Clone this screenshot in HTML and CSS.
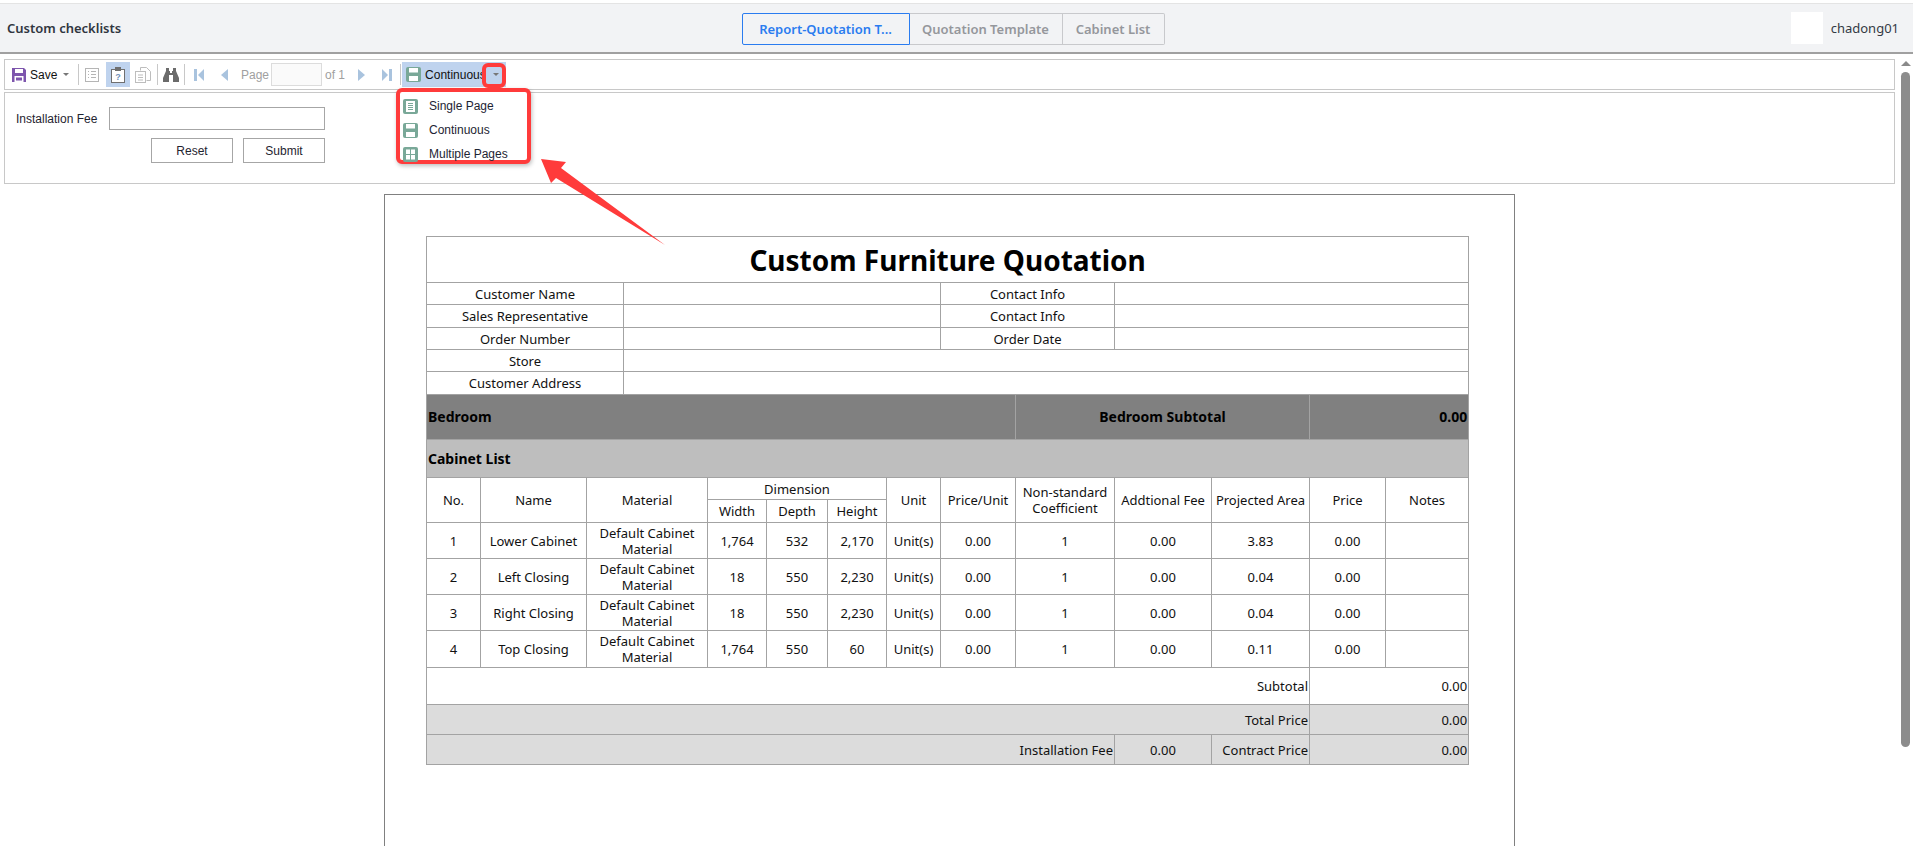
FILE: index.html
```html
<!DOCTYPE html>
<html lang="en">
<head>
    <meta charset="UTF-8">
    <title>Custom checklists</title>
    <link rel="stylesheet" href="styles.css">
</head>
<body>
    <header class="topBar">
        <div class="topTitle">Custom checklists</div>
        <div class="tabs">
            <div class="tab tabActive">Report-Quotation T...</div>
            <div class="tab tabSecond">Quotation Template</div>
            <div class="tab tabThird">Cabinet List</div>
        </div>
        <div class="userBox">
            <div class="avatar"></div>
            <span>chadong01</span>
        </div>
    </header>

    <div class="workspace">
        <main class="content">
            <div class="toolbar">
                <div class="saveBtn">
                    <svg class="icon14" viewBox="0 0 14 14"><path d="M0 0h12l2 2v12H0z" fill="#7d55ad"/><rect x="3" y="1" width="8" height="4" fill="#fff"/><rect x="2.5" y="8" width="9" height="6" fill="#fff"/><rect x="4" y="9.500" width="6" height="3" fill="#7d55ad"/></svg>
                    <span>Save</span>
                    <i class="caret"></i>
                </div>
                <i class="sep sepFirst"></i>
                <div class="tool toolList">
                    <svg class="icon14" viewBox="0 0 14 14" fill="none" stroke="#b5b5b5"><rect x=".5" y=".5" width="13" height="13"/><path d="M3 3.500h1M6 3.500h5M3 6.500h1M6 6.500h5M3 9.500h1M6 9.500h5"/></svg>
                </div>
                <div class="tool toolActive">
                    <svg class="icon16" viewBox="0 0 14 16" fill="none"><rect x=".5" y="2.500" width="13" height="13" stroke="#6f6f6f" fill="#fff"/><rect x="4" y="0" width="6" height="4" fill="#6f6f6f"/><text x="7" y="13" class="helpMark">?</text></svg>
                </div>
                <div class="tool toolCopy">
                    <svg class="icon16" viewBox="0 0 16 16" fill="none" stroke="#bdbdbd"><path d="M5.500 3.500v-3h6l4 4v9h-4"/><rect x=".5" y="4.500" width="10" height="11" fill="#fff"/><path d="M3 8h5M3 10.500h5M3 13h5"/></svg>
                </div>
                <i class="sep"></i>
                <div class="tool toolFind">
                    <svg class="icon16" viewBox="0 0 16 14" fill="#6b6b6b"><path d="M3 0h3v3h1v2h2V3h1V0h3v3l3 7v4H10V7H6v7H0v-4l3-7z"/></svg>
                </div>
                <i class="sep"></i>
                <div class="tool toolFirst">
                    <svg class="navIcon" viewBox="0 0 10 12" fill="#a9c3de"><rect width="3" height="12"/><path d="M10 0v12L4 6z"/></svg>
                </div>
                <div class="tool toolPrev">
                    <svg class="navIcon small" viewBox="0 0 7 12" fill="#a9c3de"><path d="M7 0v12L0 6z"/></svg>
                </div>
                <span class="pageLabel">Page</span>
                <input class="pageInput" type="text">
                <span class="ofLabel">of 1</span>
                <div class="tool toolNext">
                    <svg class="navIcon small" viewBox="0 0 7 12" fill="#a9c3de"><path d="M0 0v12l7-6z"/></svg>
                </div>
                <div class="tool toolLast">
                    <svg class="navIcon" viewBox="0 0 10 12" fill="#a9c3de"><path d="M0 0v12l6-6z"/><rect x="7" width="3" height="12"/></svg>
                </div>
                <i class="sep"></i>
                <div class="viewBtn">
                    <svg class="icon15" viewBox="0 0 15 15"><rect width="15" height="15" rx="2" fill="#79a898"/><rect x="3" y="1" width="9" height="4.500" fill="#fff"/><rect x="3" y="9" width="9" height="5" fill="#fff"/></svg>
                    <span>Continuous</span>
                    <i class="caret"></i>
                </div>
            </div>

            <form class="params">
                <div class="paramRow">
                    <label class="paramLabel">Installation Fee</label>
                    <input class="paramInput" type="text">
                </div>
                <div class="paramBtns">
                    <div class="paramBtn">Reset</div>
                    <div class="paramBtn">Submit</div>
                </div>
            </form>

            <div class="sheet">
                <table class="quote">
                    <colgroup>
                        <col class="c54"><col class="c106"><col class="c37"><col class="c84"><col class="c59"><col class="c61"><col class="c59">
                        <col class="c54"><col class="c75"><col class="c99"><col class="c97"><col class="c98"><col class="c76"><col class="c83">
                    </colgroup>
                    <tr class="r46"><td colspan="14" class="quoteTitle">Custom Furniture Quotation</td></tr>
                    <tr class="r22"><td colspan="3">Customer Name</td><td colspan="5"></td><td colspan="2">Contact Info</td><td colspan="4"></td></tr>
                    <tr class="r23"><td colspan="3">Sales Representative</td><td colspan="5"></td><td colspan="2">Contact Info</td><td colspan="4"></td></tr>
                    <tr class="r22"><td colspan="3">Order Number</td><td colspan="5"></td><td colspan="2">Order Date</td><td colspan="4"></td></tr>
                    <tr class="r22"><td colspan="3">Store</td><td colspan="11"></td></tr>
                    <tr class="r23"><td colspan="3">Customer Address</td><td colspan="11"></td></tr>
                    <tr class="r45 rowBedroom"><td colspan="9" class="left">Bedroom</td><td colspan="3">Bedroom Subtotal</td><td colspan="2" class="right">0.00</td></tr>
                    <tr class="r38 rowList"><td colspan="14" class="left">Cabinet List</td></tr>
                    <tr class="r22">
                        <td rowspan="2">No.</td><td rowspan="2">Name</td><td rowspan="2" colspan="2">Material</td><td colspan="3">Dimension</td>
                        <td rowspan="2">Unit</td><td rowspan="2">Price/Unit</td><td rowspan="2">Non-standard<br>Coefficient</td><td rowspan="2">Addtional Fee</td>
                        <td rowspan="2">Projected Area</td><td rowspan="2">Price</td><td rowspan="2">Notes</td>
                    </tr>
                    <tr class="r23"><td>Width</td><td>Depth</td><td>Height</td></tr>
                    <tr class="r36"><td>1</td><td>Lower Cabinet</td><td colspan="2">Default Cabinet<br>Material</td><td>1,764</td><td>532</td><td>2,170</td><td>Unit(s)</td><td>0.00</td><td>1</td><td>0.00</td><td>3.83</td><td>0.00</td><td></td></tr>
                    <tr class="r36"><td>2</td><td>Left Closing</td><td colspan="2">Default Cabinet<br>Material</td><td>18</td><td>550</td><td>2,230</td><td>Unit(s)</td><td>0.00</td><td>1</td><td>0.00</td><td>0.04</td><td>0.00</td><td></td></tr>
                    <tr class="r36"><td>3</td><td>Right Closing</td><td colspan="2">Default Cabinet<br>Material</td><td>18</td><td>550</td><td>2,230</td><td>Unit(s)</td><td>0.00</td><td>1</td><td>0.00</td><td>0.04</td><td>0.00</td><td></td></tr>
                    <tr class="r37"><td>4</td><td>Top Closing</td><td colspan="2">Default Cabinet<br>Material</td><td>1,764</td><td>550</td><td>60</td><td>Unit(s)</td><td>0.00</td><td>1</td><td>0.00</td><td>0.11</td><td>0.00</td><td></td></tr>
                    <tr class="r37"><td colspan="12" class="right">Subtotal</td><td colspan="2" class="right">0.00</td></tr>
                    <tr class="r30 rowTotal"><td colspan="12" class="right">Total Price</td><td colspan="2" class="right">0.00</td></tr>
                    <tr class="r30 rowTotal"><td colspan="10" class="right">Installation Fee</td><td>0.00</td><td class="right">Contract Price</td><td colspan="2" class="right">0.00</td></tr>
                </table>
            </div>
        </main>

        <aside class="scrollbar">
            <i class="scrollUp"></i>
            <div class="scrollThumb"></div>
        </aside>
    </div>

    <!-- things lying over the page: the open menu and the red markings -->
    <div class="viewMenu">
        <div class="menuItem">
            <svg class="icon15" viewBox="0 0 15 15"><rect width="15" height="15" rx="2" fill="#79a898"/><rect x="3" y="2" width="9" height="11" fill="#fff"/><path d="M5 4.500h5M5 6.500h5M5 8.500h5M5 10.500h5" stroke="#79a898"/></svg>
            <span>Single Page</span>
        </div>
        <div class="menuItem">
            <svg class="icon15" viewBox="0 0 15 15"><rect width="15" height="15" rx="2" fill="#79a898"/><rect x="3" y="1" width="9" height="4.500" fill="#fff"/><rect x="3" y="9" width="9" height="5" fill="#fff"/></svg>
            <span>Continuous</span>
        </div>
        <div class="menuItem">
            <svg class="icon15" viewBox="0 0 15 15"><rect width="15" height="15" rx="2" fill="#79a898"/><path d="M3 2.500h4v4.500H3zM8 2.500h4v4.500H8zM3 8h4v4.500H3zM8 8h4v4.500H8z" fill="#fff"/></svg>
            <span>Multiple Pages</span>
        </div>
    </div>
    <div class="markCaret"></div>
    <svg class="markArrow" viewBox="0 0 130 90"><polygon points="1,1 26,4 21,10 125,87 16,20 11,25" fill="#ff3b3b"/></svg>
</body>
</html>
```

FILE: styles.css
```css
*{
    box-sizing: border-box;
}
html, body{
    margin: 0;
    height: 100%;
    overflow: hidden;
    background-color: #fff;
}
body{
    position: relative;
    font-family: "Liberation Sans", sans-serif;
    font-size: 12px;
    color: #1f2430;
}
i{
    display: block;
}

/* top bar */
.topBar{
    margin-top: 3px;
    height: 51px;
    display: flex;
    align-items: center;
    padding: 0 0 0 7px;
    background-color: #f2f3f5;
    border-top: 1px solid #e4e4e4;
    border-bottom: 2px solid #a0a0a0;
    font-family: "Noto Sans", sans-serif;
}
.topTitle{
    flex: 1;
    font-size: 13px;
    font-weight: 600;
    color: #30363f;
}
.tabs{
    display: flex;
    height: 32px;
    margin-top: 1px;
}
.tab{
    display: flex;
    align-items: center;
    justify-content: center;
    font-size: 13px;
    font-weight: 600;
    color: #95979c;
    border: 1px solid #c8c9cc;
    border-left: none;
}
.tabActive{
    width: 168px;
    color: #2a7cf0;
    border: 1px solid #2a7cf0;
    border-radius: 2px 0 0 2px;
}
.tabSecond{
    width: 153px;
}
.tabThird{
    width: 102px;
    border-radius: 0 2px 2px 0;
}
.userBox{
    flex: 1;
    display: flex;
    justify-content: flex-end;
    align-items: center;
    gap: 8px;
    padding-right: 14px;
    font-size: 13px;
    color: #343a44;
}
.avatar{
    width: 32px;
    height: 32px;
    background-color: #fff;
}

/* page area */
.workspace{
    display: flex;
    height: 792px;
}
.content{
    width: 1895px;
    padding: 5px 0 0 4px;
    overflow: hidden;
}
.scrollbar{
    flex: 1;
    position: relative;
    padding: 7px 0 0 6px;
}
.scrollUp{
    width: 0;
    height: 0;
    margin-left: 0;
    border-left: 5px solid transparent;
    border-right: 5px solid transparent;
    border-bottom: 5px solid #8a8a8a;
}
.scrollThumb{
    width: 9px;
    height: 675px;
    margin-top: 6px;
    border-radius: 5px;
    background-color: #8c8c8c;
}

/* report toolbar */
.toolbar{
    height: 31px;
    display: flex;
    align-items: center;
    border: 1px solid #c8c8c8;
}
.toolbar span{
    white-space: nowrap;
}
.icon14{
    width: 14px;
    height: 14px;
    flex: none;
}
.icon15{
    width: 15px;
    height: 15px;
    flex: none;
}
.icon16{
    width: 16px;
    height: 16px;
    flex: none;
}
.helpMark{
    font-size: 9px;
    font-weight: bold;
    fill: #6f8fb8;
    text-anchor: middle;
}
.navIcon{
    width: 10px;
    height: 12px;
}
.navIcon.small{
    width: 7px;
}
.caret{
    width: 0;
    height: 0;
    border-left: 3px solid transparent;
    border-right: 3px solid transparent;
    border-top: 3px solid #777;
}
.saveBtn{
    display: flex;
    align-items: center;
    width: 67px;
    padding-left: 7px;
}
.saveBtn span{
    margin: 0 6px 0 4px;
    color: #111;
}
.sep{
    width: 1px;
    height: 21px;
    margin-left: 3px;
    background-color: #c8c8c8;
}
.sepFirst{
    margin-left: 6px;
}
.tool{
    display: flex;
    align-items: center;
    justify-content: center;
    height: 25px;
    width: 21px;
}
.toolList{
    width: 20px;
    margin-left: 3px;
}
.toolActive{
    width: 24px;
    margin-left: 4px;
    background-color: #bfd3ee;
}
.toolCopy{
    width: 22px;
    margin-left: 2px;
}
.toolFind{
    margin-left: 2px;
}
.toolFirst{
    margin-left: 3px;
}
.toolPrev{
    margin-left: 5px;
}
.pageLabel{
    margin-left: 6px;
    color: #a0a0a0;
}
.pageInput{
    width: 51px;
    height: 23px;
    margin-left: 2px;
    border: 1px solid #dcdcdc;
    background-color: #fafafa;
    padding: 0;
}
.ofLabel{
    margin-left: 3px;
    color: #a0a0a0;
}
.toolNext{
    margin-left: 6px;
}
.toolLast{
    margin-left: 4px;
}
.viewBtn{
    display: flex;
    align-items: center;
    width: 104px;
    height: 25px;
    margin-left: 1px;
    padding-left: 4px;
    background-color: #bfd3ee;
}
.viewBtn span{
    margin: 0 7px 0 4px;
    color: #111;
}

/* parameter form */
.params{
    height: 92px;
    margin-top: 2px;
    padding: 14px 0 0 11px;
    border: 1px solid #c8c8c8;
}
.paramRow{
    display: flex;
    align-items: center;
    height: 23px;
}
.paramLabel{
    width: 93px;
}
.paramInput{
    width: 216px;
    height: 23px;
    border: 1px solid #a6a6a6;
    padding: 0;
    background-color: #fff;
}
.paramBtns{
    display: flex;
    gap: 10px;
    margin: 8px 0 0 135px;
}
.paramBtn{
    width: 82px;
    height: 25px;
    display: flex;
    align-items: center;
    justify-content: center;
    border: 1px solid #a6a6a6;
}

/* report sheet */
.sheet{
    width: 1131px;
    height: 900px;
    margin: 10px auto 0;
    padding: 41px 0 0 41px;
    border: 1px solid #808080;
}
.quote{
    width: 1043px;
    table-layout: fixed;
    border-collapse: collapse;
    font-family: "Noto Sans", sans-serif;
    font-size: 13px;
    line-height: 16px;
    color: #111;
}
.quote td{
    border: 1px solid #a3a3a3;
    padding: 0;
    text-align: center;
    overflow: hidden;
    white-space: nowrap;
}
.quote td.left{
    text-align: left;
    padding-left: 1px;
    font-weight: bold;
}
.quote td.right{
    text-align: right;
    padding-right: 1px;
}
.quoteTitle{
    font-size: 28px;
    line-height: 34px;
    font-weight: bold;
    color: #000;
}
.rowBedroom td{
    background-color: #808080;
    font-size: 14px;
    font-weight: bold;
    color: #000;
}
.rowList td{
    background-color: #bebebe;
    font-size: 14px;
    color: #000;
}
.rowTotal td{
    background-color: #dcdcdc;
}
.c37{ width: 37px; }
.c54{ width: 54px; }
.c59{ width: 59px; }
.c61{ width: 61px; }
.c75{ width: 75px; }
.c76{ width: 76px; }
.c83{ width: 83px; }
.c84{ width: 84px; }
.c97{ width: 97px; }
.c98{ width: 98px; }
.c99{ width: 99px; }
.c106{ width: 106px; }
.r22{ height: 22px; }
.r23{ height: 23px; }
.r30{ height: 30px; }
.r36{ height: 36px; }
.r37{ height: 37px; }
.r38{ height: 38px; }
.r45{ height: 45px; }
.r46{ height: 46px; }

/* open dropdown and red markings */
.viewMenu{
    position: absolute;
    left: 396px;
    top: 88px;
    width: 135px;
    height: 76px;
    padding: 2px 0 0 7px;
    background-color: #fff;
    border: 4px solid #ff3b3b;
    border-radius: 6px;
    box-shadow: 1px 2px 4px rgba(0, 0, 0, 0.25);
}
.menuItem{
    display: flex;
    align-items: center;
    gap: 11px;
    height: 24px;
    margin-left: -4px;
    color: #1d2433;
}
.markCaret{
    position: absolute;
    left: 482px;
    top: 63px;
    width: 24px;
    height: 25px;
    border: 4px solid #ff3b3b;
    border-radius: 6px;
}
.markArrow{
    position: absolute;
    left: 540px;
    top: 158px;
    width: 130px;
    height: 90px;
}
```
